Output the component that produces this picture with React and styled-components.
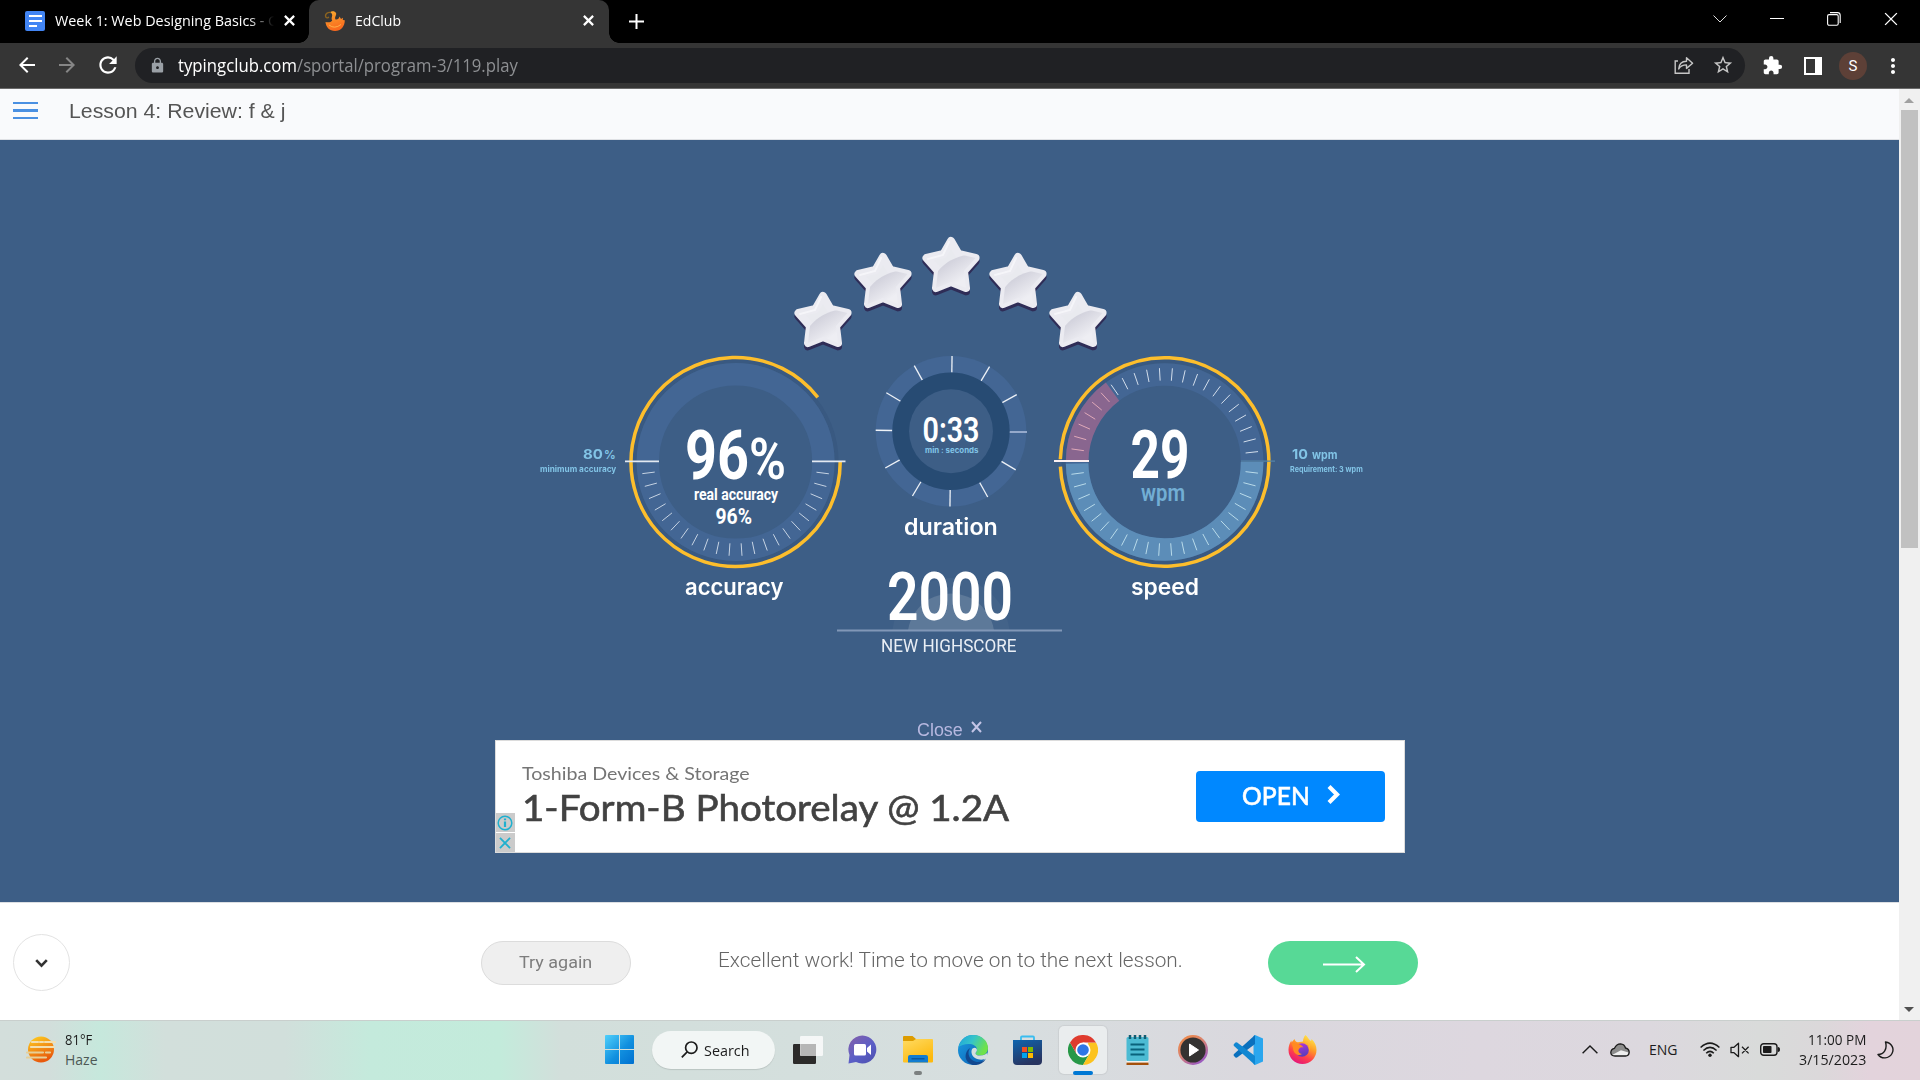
import React, { useLayoutEffect, useRef, useState } from "react";
import styled, { createGlobalStyle } from "styled-components";
import { MdArrowBack, MdArrowForward, MdRefresh, MdLock, MdExtension, MdStarBorder, MdMoreVert } from "react-icons/md";

const UI = `"Open Sans", "Noto Sans", sans-serif`;
const ARIAL = `"Liberation Sans", Arial, sans-serif`;
const NARROW = `Roboto, sans-serif`;
const ROUND = `Inter, sans-serif`;

const Global = createGlobalStyle`
  * { box-sizing: border-box; }
  body { margin: 0; background: #fff; overflow: hidden; font-family: ${UI}; }
  svg { display: block; flex: none; }
  button { border: 0; padding: 0; background: none; }
`;

/* ---------- text held to a set width ---------- */
const FitBox = styled.span`
  display: inline-block;
  flex: none;
  width: ${(p) => p.$w}px;
  white-space: pre;
  text-align: left;
`;
const FitText = styled.span`
  display: inline-block;
  transform-origin: 0 50%;
`;
function Fit({ w, children }) {
  const ref = useRef(null);
  const [scale, setScale] = useState(1);
  useLayoutEffect(() => {
    setScale(w / ref.current.offsetWidth);
  }, [w, children]);
  return (
    <FitBox $w={w}>
      <FitText ref={ref} style={{ transform: `scaleX(${scale})` }}>{children}</FitText>
    </FitBox>
  );
}

/* ---------- browser frame ---------- */
const Screen = styled.div`
  width: 1920px;
  height: 1080px;
  display: flex;
  flex-direction: column;
  overflow: hidden;
`;
const TabStrip = styled.div`
  flex: none;
  height: 43px;
  background: #000;
  display: flex;
  color: #fff;
  font-size: 15px;
`;
const Tab = styled.div`
  position: relative;
  width: ${(p) => p.$w}px;
  display: flex;
  align-items: center;
  padding: 0 ${(p) => p.$right}px 2px ${(p) => p.$left}px;
  gap: 10px;
  background: ${(p) => (p.$active ? "#353535" : "transparent")};
  border-radius: 10px 10px 0 0;
  ${(p) => p.$active && `
    &::before, &::after {
      content: ""; position: absolute; bottom: 0; width: 10px; height: 10px;
    }
    &::before { left: -10px; background: radial-gradient(circle at 0 0, transparent 9.5px, #353535 10px); }
    &::after { right: -10px; background: radial-gradient(circle at 100% 0, transparent 9.5px, #353535 10px); }
  `}
`;
const TabTitle = styled.span`
  flex: 1;
  overflow: hidden;
  white-space: nowrap;
  padding-bottom: 2px;
  ${(p) => p.$fade && `mask-image: linear-gradient(90deg, #000 88%, transparent 100%);`}
`;
const NewTab = styled.div`
  width: 54px;
  display: grid;
  place-items: center;
  padding-bottom: 1px;
`;
const WindowButtons = styled.div`
  margin-left: auto;
  display: flex;
  align-items: center;
  gap: 43px;
  padding: 0 22px 6px 0;
`;
const Toolbar = styled.div`
  flex: none;
  height: 46px;
  background: #353535;
  border-bottom: 1px solid #6a6a6a;
  display: flex;
  align-items: center;
  color: #fff;
`;
const NavButtons = styled.div`
  width: 135px;
  display: flex;
  align-items: center;
  gap: 16px;
  padding: 0 0 1px 15px;
`;
const Omnibox = styled.div`
  width: 1610px;
  height: 35px;
  border-radius: 18px;
  background: #202124;
  display: flex;
  align-items: center;
  padding: 0 11px 0 14px;
  margin-bottom: 1px;
`;
const Url = styled.span`
  display: flex;
  margin-left: 12px;
  font-size: 18px;
  line-height: 30px;
  color: #fff;
`;
const UrlPath = styled.span`color: #8d8f92;`;
const OmniActions = styled.div`
  margin-left: auto;
  display: flex;
  align-items: center;
  gap: 18px;
  color: #c6c6c6;
`;
const ToolbarActions = styled.div`
  display: flex;
  align-items: center;
  padding: 0 0 0 17px;
`;
const Avatar = styled.div`
  width: 28px;
  height: 28px;
  border-radius: 50%;
  background: #5d4037;
  display: grid;
  place-items: center;
  font: 15px/28px Roboto, sans-serif;
  margin: 0 14px 0 17px;
`;
const PanelIcon = styled.div`
  width: 18px;
  height: 18px;
  background: #353535;
  border: 2.5px solid #fff;
  border-right-width: 7px;
  margin-left: 21px;
`;

/* ---------- page ---------- */
const Viewport = styled.div`
  flex: none;
  height: 931px;
  display: flex;
`;
const Page = styled.div`
  width: 1899px;
  display: flex;
  flex-direction: column;
`;
const Header = styled.header`
  height: 51px;
  background: #f9fafc;
  border-bottom: 1px solid #dfe1e5;
  display: flex;
  align-items: center;
  padding: 0 0 7px 13px;
  gap: 31px;
  font: 20px/24px ${ARIAL};
  color: #555;
`;
const Burger = styled.div`
  width: 25px;
  height: 17px;
  border-top: 2px solid #4a90e2;
  border-bottom: 2px solid #4a90e2;
  display: flex;
  align-items: center;
  &::before { content: ""; width: 100%; height: 3px; background: #4a90e2; }
`;
const Scrollbar = styled.div`
  width: 21px;
  background: #f0f0f0;
  display: flex;
  flex-direction: column;
  align-items: center;
  padding: 9px 1px 8px 0;
`;
const Thumb = styled.div`
  width: 17px;
  height: 438px;
  background: #c1c1c1;
  margin: 7px 0 auto;
`;
const Stage = styled.main`
  height: 762px;
  background: #3d5e86;
  display: flex;
  flex-direction: column;
  align-items: center;
  color: #fff;
`;
const Stars = styled.div`
  display: flex;
  width: 316px;
  margin: 95px 0 0 3px;
  height: 116px;
`;
const StarSlot = styled.div`
  margin: ${(p) => p.$drop}px ${(p) => p.$side}px 0 ${(p) => p.$side}px;
  height: 61px;
`;
const Results = styled.div`
  display: flex;
  margin: 4px 0 0 4px;
  height: 313px;
`;
const Column = styled.div`
  width: ${(p) => p.$w}px;
  display: flex;
  flex-direction: column;
  align-items: center;
`;
const Note = styled.div`
  padding-top: 90px;
  color: #82c4e6;
  display: flex;
  flex-direction: column;
  align-items: ${(p) => p.$align};
  font-family: ${ROUND};
  font-weight: 700;
  margin: ${(p) => p.$margin};
`;
const NoteValue = styled.div`
  font-size: 13.5px;
  line-height: 18px;
  display: flex;
  align-items: baseline;
  gap: ${(p) => p.$gap}px;
  padding-left: ${(p) => p.$inset || 0}px;
`;
const NoteUnit = styled.span`font-size: 11.5px;`;
const NoteText = styled.div`font-size: 8px; line-height: 10px;`;
const DialLabel = styled.div`
  font: 600 22.5px/28px ${ROUND};
  margin-top: ${(p) => p.$top}px;
  padding-right: ${(p) => p.$shift || 0}px;
`;
const Score = styled.div`
  width: 225px;
  margin: 14px -11px 0 -13px;
  display: flex;
  flex-direction: column;
  align-items: center;
`;
const ScoreLabel = styled.div`
  font: 17.5px/22px Roboto, sans-serif;
  color: #e9eef5;
  margin-top: -4px;
  padding-right: 1px;
`;

/* ---------- advert ---------- */
const AdClose = styled.div`
  margin-top: 52px;
  height: 20px;
  display: flex;
  align-items: center;
  gap: 8px;
  padding-right: 1px;
  font: 17.5px/20px ${ARIAL};
  color: #b7b8e0;
`;
const CloseMark = styled.div`
  padding-bottom: 7px;
`;
const Ad = styled.div`
  width: 910px;
  height: 113px;
  background: #fff;
  border: 1px solid #dcdcdc;
  display: flex;
  align-items: stretch;
`;
const AdBadges = styled.div`
  width: 19px;
  display: flex;
  flex-direction: column;
  justify-content: flex-end;
  gap: 1px;
`;
const AdBadge = styled.div`
  height: 19px;
  background: #cbcbcb;
  display: grid;
  place-items: center;
`;
const AdCopy = styled.div`
  padding: 20px 0 0 7px;
  flex: 1;
`;
const Advertiser = styled.div`
  font: 18px/24px Lato, sans-serif;
  color: #757575;
`;
const Headline = styled.div`
  font: 36px/44px Lato, sans-serif;
  color: #424242;
  -webkit-text-stroke: 0.6px #424242;
`;
const AdButton = styled.button`
  width: 189px;
  height: 51px;
  margin: 30px 19px 0 0;
  border-radius: 4px;
  background: #08f;
  color: #fff;
  display: flex;
  align-items: center;
  justify-content: center;
  gap: 17px;
  font: 500 25px/30px Lato, sans-serif;
  -webkit-text-stroke: 0.5px #fff;
  padding: 0 0 4px 1px;
`;

/* ---------- footer ---------- */
const Footer = styled.footer`
  height: 118px;
  background: #fff;
  border-top: 1px solid #dcdfe3;
  display: flex;
  align-items: center;
  padding: 2px 0 0 13px;
  font-family: Roboto, sans-serif;
`;
const CollapseButton = styled.button`
  width: 57px;
  height: 57px;
  border: 1px solid #e3e3e3;
  border-radius: 50%;
  display: grid;
  place-items: center;
  padding-top: 1px;
`;
const TryAgain = styled.button`
  width: 150px;
  height: 44px;
  margin-left: 411px;
  border: 1px solid #dcdcdc;
  border-radius: 22px;
  background: #efefef;
  font: 17px/24px Roboto, sans-serif;
  color: #7d7d7d;
  padding: 0 1px 1px 0;
`;
const Message = styled.div`
  margin: -6px 85px 0 87px;
  font: 300 20px/24px Roboto, sans-serif;
  color: #666;
`;
const NextButton = styled.button`
  width: 150px;
  height: 44px;
  border-radius: 22px;
  background: #57d996;
  display: grid;
  place-items: center;
  padding: 4px 0 0 2px;
`;

/* ---------- taskbar ---------- */
const Taskbar = styled.div`
  flex: none;
  height: 60px;
  border-top: 1px solid #c9cfcd;
  background: linear-gradient(90deg, #d3dedb 0, #d2dedb 50px, #c6e8dc 100px, #d2dfdb 165px, #d1dfdb 285px, #c4eadc 370px, #c3ebdb 500px, #d2dfdb 560px, #d4dfdd 800px, #d7dedf 1000px, #dad8de 1250px, #ddd7df 1480px, #dcd8de 1650px, #d9dbda 1760px, #dbd8da 1820px, #e3d3dc 1870px, #e3d3db 1920px);
  display: flex;
  align-items: center;
  padding-bottom: 2px;
  color: #1c1c1c;
  font-size: 14px;
`;
const Weather = styled.div`
  width: 592px;
  display: flex;
  gap: 9px;
  padding-left: 26px;
  align-items: center;
`;
const TwoLines = styled.div`
  display: flex;
  flex-direction: column;
  align-items: ${(p) => p.$align};
  line-height: 20px;
  padding-top: ${(p) => p.$nudge || 0}px;
`;
const Dim = styled.span`color: #4d5955;`;
const AppSlot = styled.div`
  position: relative;
  width: 55px;
  height: 58px;
  display: grid;
  place-items: center;
`;
const ActiveSlot = styled.div`
  width: 48px;
  height: 48px;
  border-radius: 5px;
  background: #eaedee;
  box-shadow: 0 0 1px 1px rgba(0, 0, 0, 0.06);
  display: grid;
  place-items: center;
`;
const Running = styled.div`
  position: absolute;
  bottom: 4px;
  left: calc(50% - ${(p) => p.$w / 2}px);
  width: ${(p) => p.$w}px;
  height: 4px;
  border-radius: 2px;
  background: ${(p) => (p.$active ? "#0078d4" : "#7b8080")};
`;
const SearchPill = styled.div`
  width: 123px;
  height: 38px;
  margin: 0 5px;
  border-radius: 19px;
  background: #f2f6f5;
  box-shadow: 0 1px 1px rgba(0, 0, 0, 0.12);
  display: flex;
  align-items: center;
  gap: 6px;
  padding: 0 0 0 29px;
  font-size: 15px;
`;
const Tray = styled.div`
  margin-left: auto;
  display: flex;
  align-items: center;
  padding-right: 26px;
`;
const TrayItem = styled.div`margin-right: ${(p) => p.$gap}px;`;

/* ---------- dial drawing helpers ---------- */
const polar = (cx, cy, r, deg) => {
  const a = (deg * Math.PI) / 180;
  return [cx + r * Math.cos(a), cy + r * Math.sin(a)];
};
const arc = (cx, cy, r, from, to) => {
  const [x1, y1] = polar(cx, cy, r, from);
  const [x2, y2] = polar(cx, cy, r, to);
  return `M${x1} ${y1}A${r} ${r} 0 ${to - from > 180 ? 1 : 0} 1 ${x2} ${y2}`;
};
const Ticks = ({ cx, cy, r1, r2, start, step, count, color, width }) => (
  <g stroke={color} strokeWidth={width}>
    {Array.from({ length: count }, (_, i) => {
      const [x1, y1] = polar(cx, cy, r1, start + i * step);
      const [x2, y2] = polar(cx, cy, r2, start + i * step);
      return <line key={i} x1={x1} y1={y1} x2={x2} y2={y2} />;
    })}
  </g>
);
const DialText = ({ x, y, w, size, weight = 700, fill = "#fff", font = NARROW, children }) => (
  <text x={x} y={y} textLength={w} lengthAdjust="spacingAndGlyphs" fontSize={size} fontWeight={weight} fill={fill} fontFamily={font}>
    {children}
  </text>
);

const AccuracyDial = () => (
  <svg width="228" height="214">
    <circle cx="113.6" cy="107" r="101" fill="none" stroke="#395981" strokeWidth="4" />
    <circle cx="113.6" cy="107" r="87.8" fill="none" stroke="#436694" strokeWidth="22.4" />
    <Ticks cx={113.6} cy={107} r1={81.5} r2={94} start={7.2} step={7.89} count={22} color="#c6d3e3" width={1} />
    <path d={arc(113.6, 107, 104.6, 0, 321.8)} fill="none" stroke="#fdbe2c" strokeWidth="3.5" />
    <path d="M3 106.3H37M190 106.3H223.5" stroke="#e3e9f1" strokeWidth="1.8" />
    <DialText x={63} y={124} w={64} size={68}>96</DialText>
    <DialText x={127} y={124} w={37} size={57} weight={600}>%</DialText>
    <DialText x={72} y={145} w={84} size={16.5}>real accuracy</DialText>
    <DialText x={93.5} y={168.5} w={36.5} size={22.5}>96%</DialText>
  </svg>
);

const DurationDial = () => (
  <svg width="152" height="152">
    <circle cx="76" cy="76.3" r="75.3" fill="#436694" />
    <Ticks cx={76} cy={76.3} r1={58.7} r2={75.3} start={30.8} step={30} count={11} color="#eef2f7" width={1.3} />
    <path d="M134 77H152" stroke="#9fb1d2" strokeWidth="1.8" />
    <circle cx="76" cy="76.3" r="58.7" fill="#274b73" />
    <circle cx="76" cy="76.3" r="42" fill="#3d5e86" />
    <DialText x={47.5} y={86.5} w={57} size={35.5} weight={600}>0:33</DialText>
    <DialText x={50} y={98} w={53.5} size={8} weight={700} fill="#82c4e6" font={ROUND}>min : seconds</DialText>
  </svg>
);

const SpeedDial = () => (
  <svg width="228" height="214">
    <circle cx="113.6" cy="107" r="101" fill="none" stroke="#395981" strokeWidth="4" />
    <circle cx="113.6" cy="107" r="87.5" fill="none" stroke="#436694" strokeWidth="22.6" />
    <path d={arc(113.6, 107, 87.5, 0, 179)} fill="none" stroke="#5c8db8" strokeWidth="22.6" />
    <path d={arc(113.6, 107, 87.5, 180, 233.5)} fill="none" stroke="#89668f" strokeWidth="22.6" />
    <Ticks cx={113.6} cy={107} r1={81.5} r2={94} start={6.8} step={7.89} count={22} color="#b9dbea" width={1} />
    <Ticks cx={113.6} cy={107} r1={81.5} r2={94} start={188} step={7.89} count={6} color="#e0a9b9" width={1} />
    <Ticks cx={113.6} cy={107} r1={81.5} r2={94} start={235.3} step={7.89} count={16} color="#d3deec" width={1} />
    <path d={arc(113.6, 107, 104.3, -178.5, 177.5)} fill="none" stroke="#fdbe2c" strokeWidth="3.5" />
    <path d="M3 106H38" stroke="#fbf0f2" strokeWidth="2" />
    <path d="M190 106.2H224" stroke="#5583a6" strokeWidth="1.2" />
    <DialText x={79.5} y={123} w={59} size={67}>29</DialText>
    <DialText x={90} y={146} w={44} size={24} weight={600} fill="#72aed4">wpm</DialText>
  </svg>
);

const ScoreArt = () => (
  <svg width="225" height="84">
    <clipPath id="horizon"><rect width="225" height="75" /></clipPath>
    <g clipPath="url(#horizon)" fill="#fff">
      <circle cx="114" cy="82" r="59" fillOpacity=".03" />
      <circle cx="114" cy="82" r="43.5" fillOpacity=".14" />
    </g>
    <path d="M0 75.5H225" stroke="#8197b7" strokeWidth="2" />
    <DialText x={50} y={65} w={126} size={67} weight={600}>2000</DialText>
  </svg>
);

const STAR = "30,5 37.5,18 54.5,22 43,35 45,52 30,46 15,52 17,35 5.5,22 22.5,18";
const Star = ({ id }) => (
  <svg width="60" height="61">
    <defs>
      <clipPath id={`c${id}`}><polygon points={STAR} /></clipPath>
      <linearGradient id={`g${id}`} x1="0" y1="0" x2=".7" y2="1">
        <stop offset=".2" stopColor="#cbcbd7" />
        <stop offset=".75" stopColor="#eeeef3" />
      </linearGradient>
    </defs>
    <polygon points={STAR} transform="translate(0 3.4)" fill="#2f2d57" stroke="#2f2d57" strokeWidth="8" strokeLinejoin="round" />
    <polygon points={STAR} fill="#e9eaef" stroke="#ebebf1" strokeWidth="8" strokeLinejoin="round" />
    <path d="M12 44C18 30 30 20 56 17V58H12Z" fill={`url(#g${id})`} clipPath={`url(#c${id})`} />
    <path d="M28 6L22 19L7 23" fill="none" stroke="#f9f9fc" strokeWidth="2" strokeLinecap="round" opacity=".7" />
  </svg>
);

/* ---------- browser icons ---------- */
const Cross = ({ size = 10, width = 2, color = "#fff" }) => (
  <svg width={size} height={size} viewBox="0 0 10 10">
    <path d="M.8.8L9.2 9.2M9.2.8L.8 9.2" stroke={color} strokeWidth={width} />
  </svg>
);
const DocsIcon = () => (
  <svg width="20" height="20">
    <rect width="20" height="20" rx="2" fill="#4285f4" />
    <path d="M4 5H17M4 10H17M4 15H12" stroke="#fff" strokeWidth="2.2" />
  </svg>
);
const PhoenixIcon = () => (
  <svg width="21" height="22" viewBox="0 0 21 22">
    <defs><linearGradient id="phx" x2=".3" y2="1"><stop stopColor="#f9ab2e" /><stop offset="1" stopColor="#f9691e" /></linearGradient></defs>
    <path d="M11.5 9.5C14 9.8 15 8.5 15.5 6.5L17 9L19 7.8L18.8 10L20.8 10.3C20.8 16.5 17 21 11 21C5.5 21 1.8 17 1.5 12C4.5 12.8 7 12.3 8.2 10.5C7 8.8 8 7 8.2 5.5C8.3 4 7.5 3 6.2 2.8C7.2.8 10.8.8 12 3C13 5 10.2 6.5 11.5 9.5Z" fill="url(#phx)" />
    <path d="M6.8 2.5C4 1.8 1.4 3.5 1.5 6C1.7 8.2 4.2 8.4 4.7 6.8" fill="none" stroke="#8c6420" strokeWidth="1.4" />
    <path d="M5 15Q10.5 19.5 17 14.5" fill="none" stroke="#ffb54d" strokeWidth=".9" />
  </svg>
);
const ShareIcon = () => (
  <svg width="20" height="20" viewBox="0 0 20 20" fill="none" stroke="#c6c6c6" strokeWidth="1.4">
    <path d="M4 6H1.2V18.3H15V14" />
    <path d="M4.7 14C5 9 8 6.3 12.5 6.2V2.7L18.6 8.2L12.5 13.4V9.9C9 9.9 6.5 11 4.7 14Z" strokeLinejoin="round" />
  </svg>
);

/* ---------- taskbar icons ---------- */
const WeatherIcon = () => (
  <svg width="30" height="28" viewBox="0 0 30 28">
    <defs><linearGradient id="sun" x2=".4" y2="1"><stop stopColor="#ffd321" /><stop offset="1" stopColor="#e8590c" /></linearGradient></defs>
    <circle cx="15" cy="13.5" r="13" fill="url(#sun)" />
    <path d="M6 6H12M14 6H17M19 6H29M5 11H28" stroke="#f3dfae" strokeWidth="2.2" strokeLinecap="round" />
    <path d="M1 16.5H17M20 16.5H24M1 21.5H20" stroke="#e6cf98" strokeWidth="2.2" strokeLinecap="round" />
  </svg>
);
const StartIcon = () => (
  <svg width="29" height="29">
    <defs><linearGradient id="win" x2="1" y2="1"><stop stopColor="#4fd0fb" /><stop offset=".55" stopColor="#1190df" /><stop offset="1" stopColor="#0070d0" /></linearGradient></defs>
    <path d="M1 0H14V14H0V1Q0 0 1 0ZM15 0H28Q29 0 29 1V14H15ZM0 15H14V29H1Q0 29 0 28ZM15 15H29V28Q29 29 28 29H15Z" fill="url(#win)" />
  </svg>
);
const SearchIcon = () => (
  <svg width="17" height="17" fill="none" stroke="#1b1b1b" strokeWidth="1.7">
    <circle cx="10.3" cy="6.7" r="5.7" /><path d="M6.2 10.8L.8 16.3" />
  </svg>
);
const TaskViewIcon = () => (
  <svg width="30" height="28">
    <rect y="8" width="23" height="20" rx="1.2" fill="#2c2b2a" />
    <rect x="7" width="23" height="20" rx="1.2" fill="#fdfdfd" fillOpacity=".82" />
    <rect x="7.5" y="8" width="15.5" height="12" fill="#b6b6b6" />
  </svg>
);
const ChatIcon = () => (
  <svg width="29" height="29" viewBox="0 0 29 29">
    <defs><linearGradient id="chat" x1="0" x2=".8" y2="1"><stop stopColor="#8660a9" /><stop offset=".6" stopColor="#5b5fc7" /><stop offset="1" stopColor="#4f52b2" /></linearGradient></defs>
    <path d="M14.5.5A14 14 0 1 1 8 27L.5 28.5L1.5 20A14 14 0 0 1 14.5.5Z" fill="url(#chat)" />
    <rect x="6" y="9" width="12" height="11.5" rx="1.5" fill="#fff" />
    <path d="M19 13L23 9.5V20L19 16.5Z" fill="#fff" />
  </svg>
);
const FolderIcon = () => (
  <svg width="30" height="27" viewBox="0 0 30 27">
    <defs><linearGradient id="fold" x2=".6" y2="1"><stop stopColor="#ffdb63" /><stop offset="1" stopColor="#fdb90d" /></linearGradient></defs>
    <path d="M0 1Q0 0 1 0H9.5L13 3H29V10H0Z" fill="#dd9c00" />
    <path d="M0 5H10L13 3H29Q30 3 30 4V25.5Q30 26.5 29 26.5H1Q0 26.5 0 25.5Z" fill="url(#fold)" />
    <path d="M5 26.5V21Q5 19 7 19H23Q25 19 25 21V26.5Z" fill="#127cd0" />
    <path d="M8.5 22.8H21.5" stroke="#0a4f93" strokeWidth="1.2" />
  </svg>
);
const EdgeIcon = () => (
  <svg width="30" height="30" viewBox="0 0 30 30">
    <defs>
      <linearGradient id="e1" x2="1" y2=".4"><stop stopColor="#1da3dc" /><stop offset=".5" stopColor="#35c4c9" /><stop offset="1" stopColor="#6fe24a" /></linearGradient>
      <linearGradient id="e2" y2="1"><stop stopColor="#1b9de2" /><stop offset="1" stopColor="#0b5cb0" /></linearGradient>
    </defs>
    <circle cx="15" cy="15" r="15" fill="url(#e2)" />
    <path d="M.5 12C3 4 8 0 15 0C24 0 30 6 30 13C30 18 26.5 20.5 22.5 20.5C19 20.5 17.5 19.5 17.5 18.5C17.5 17.5 19 17 19 14.8C19 11 15 9 10.5 9C6 9 2.5 10.5.5 12Z" fill="url(#e1)" />
    <path d="M12.5 13C9 16.5 10 24 17 26.5C21 28 25 26.5 28 24C25 28.5 20 30.5 15 30C9 28 6.5 23.5 8 18.5C8.8 15.5 10.5 13.7 12.5 13Z" fill="#11488f" />
    <path d="M17.5 18.5C18 20.3 20 20.8 22.5 20.5C26 20.3 28.5 19 29.5 17.5V22.5L28.6 23.3C26 25 21 25.5 17 23C13.5 20.7 12.5 16 14.5 13.5Q18 11.5 19 14.8C19 17 17.3 17.3 17.5 18.5Z" fill="#d5dfde" />
  </svg>
);
const StoreIcon = () => (
  <svg width="29" height="30" viewBox="0 0 29 30">
    <defs><linearGradient id="bag" x2=".4" y2="1"><stop stopColor="#0f65af" /><stop offset="1" stopColor="#273460" /></linearGradient></defs>
    <path d="M8 7V2.5Q8 1.5 9 1.5H20Q21 1.5 21 2.5V7" fill="none" stroke="#39bdf0" strokeWidth="1.8" />
    <path d="M0 5H29V26Q29 30 25 30H4Q0 30 0 26Z" fill="url(#bag)" />
    <path d="M9 12H14V17H9Z" fill="#f25022" /><path d="M15 12H20V17H15Z" fill="#7fba00" />
    <path d="M9 18H14V23H9Z" fill="#00a4ef" /><path d="M15 18H20V23H15Z" fill="#ffb900" />
  </svg>
);
const ChromeIcon = () => (
  <svg width="30" height="30" viewBox="0 0 30 30">
    <path d="M2 7.5A15 15 0 0 0 15 30L21.5 18.8L15 15L8.5 18.8Z" fill="#279847" />
    <path d="M28 7.5A15 15 0 0 1 15 30L21.5 18.8L20 7.5Z" fill="#fcc31e" />
    <path d="M15 7.5H28A15 15 0 0 0 2 7.5L8.5 18.8Z" fill="#df3b2e" />
    <circle cx="15" cy="15" r="7.5" fill="#fff" /><circle cx="15" cy="15" r="5.8" fill="#2f76e6" />
  </svg>
);
const NotepadIcon = () => (
  <svg width="23" height="30" viewBox="0 0 23 30">
    <path d="M.5 24H22.5V29H.5Z" fill="#f4f2ef" /><path d="M.5 28.8H22.5" stroke="#a4500b" strokeWidth="2.4" />
    <rect x=".5" y="2" width="22" height="24" rx="1.5" fill="#4cbbd3" />
    <path d="M4.5 9.5H18.5M4.5 14.5H18.5M4.5 19.5H18.5" stroke="#09627c" strokeWidth="1.8" />
    <path d="M4 0V4M9 0V4M14 0V4M19 0V4" stroke="#115c72" strokeWidth="2.5" />
  </svg>
);
const MediaIcon = () => (
  <svg width="30" height="30" viewBox="0 0 30 30">
    <defs><linearGradient id="med" x2=".7" y2="1"><stop stopColor="#f48a3d" /><stop offset=".5" stopColor="#d9836f" /><stop offset="1" stopColor="#9757c6" /></linearGradient></defs>
    <circle cx="15" cy="15" r="15" fill="url(#med)" /><circle cx="15" cy="15" r="12.6" fill="#343231" />
    <path d="M11.5 9L20.5 15L11.5 21Z" fill="#fff" stroke="#fff" strokeLinejoin="round" />
  </svg>
);
const CodeIcon = () => (
  <svg width="30" height="30" viewBox="0 0 30 30">
    <path d="M22 0L30 3.5V26.5L22 30L20.5 29V1Z" fill="#2aa6ee" />
    <path d="M22 0L1 19Q0 20 1 21L2.5 22.5Q3.5 23 4.5 22.3L22 9Z" fill="#0a70bd" />
    <path d="M22 30L1 11Q0 10 1 9L2.5 7.5Q3.5 7 4.5 7.7L22 21Z" fill="#1187d2" />
  </svg>
);
const FirefoxIcon = () => (
  <svg width="29" height="29" viewBox="0 0 29 29">
    <defs>
      <linearGradient id="ff" x1=".8" x2=".3" y2="1"><stop stopColor="#fff14f" /><stop offset=".4" stopColor="#ff9a26" /><stop offset=".7" stopColor="#ff3f4b" /><stop offset="1" stopColor="#e2147d" /></linearGradient>
      <linearGradient id="fp" x2=".3" y2="1"><stop stopColor="#b833e1" /><stop offset="1" stopColor="#5b3dbd" /></linearGradient>
    </defs>
    <path d="M17.5 0C20 2 20.5 4.5 23 6C23.5 5 23.5 4 23.5 4C27 7 28.5 11 28.5 15A14 14 0 0 1 .5 15C.5 11 1.5 8 3.5 5.5V7.5L6.5 4C7 6 8 7 10 7.3L15 6.5C15 4 16 1.5 17.5 0Z" fill="url(#ff)" />
    <circle cx="14" cy="15" r="6.8" fill="url(#fp)" />
    <path d="M3.5 8C8 8 13 9 15.5 12.5C13 12 12 12.5 11 14C9.5 16 11 18.5 14 19C10 22 5 18 5 13Z" fill="#ff8a22" />
    <path d="M17 6C21 8 22.5 13 21 17C23 14 22.5 9 19 6Z" fill="#ffbd36" />
  </svg>
);
const CloudIcon = () => (
  <svg width="20" height="14" viewBox="0 0 20 14">
    <path d="M5 13Q.8 13 .8 9.5Q1 6 4.5 5.3Q6.5.8 10.5.8Q14.5 1 15.5 5Q19.2 6 19.2 9.3Q19 13 15.5 13Z" fill="#8d8d8d" />
    <path d="M2 12L11 7.3L18.5 9.5Q18.5 13 15 13H5Z" fill="#efefef" />
    <path d="M5 13Q.8 13 .8 9.5Q1 6 4.5 5.3Q6.5.8 10.5.8Q14.5 1 15.5 5Q19.2 6 19.2 9.3Q19 13 15.5 13Z" fill="none" stroke="#1b1b1b" strokeWidth="1.3" />
  </svg>
);
const WifiIcon = () => (
  <svg width="20" height="16" viewBox="0 0 20 16" fill="none" stroke="#1b1b1b" strokeWidth="1.5">
    <path d="M.6 5.5Q10-3.2 19.4 5.5M3.4 8.5Q10 2.2 16.6 8.5M6.2 11.3Q10 7.5 13.8 11.3" />
    <circle cx="10" cy="13.3" r="1.7" fill="#1b1b1b" stroke="none" />
  </svg>
);
const MuteIcon = () => (
  <svg width="20" height="16" viewBox="0 0 20 16" fill="none" stroke="#1b1b1b" strokeWidth="1.3">
    <path d="M1 5.3H4L8.5 1.3V14.7L4 10.7H1ZM12 4.8L18.6 11.4M18.6 4.8L12 11.4" strokeLinejoin="round" />
  </svg>
);
const BatteryIcon = () => (
  <svg width="20" height="13" viewBox="0 0 20 13">
    <rect x=".7" y=".7" width="16.3" height="11.6" rx="3" fill="none" stroke="#1b1b1b" strokeWidth="1.4" />
    <rect x="3" y="3" width="8.5" height="7" rx=".8" fill="#1b1b1b" /><path d="M18 4.5H19Q20 5 20 6.5Q20 8 19 8.5H18Z" fill="#1b1b1b" stroke="#1b1b1b" strokeWidth=".6" />
  </svg>
);
const MoonIcon = () => (
  <svg width="17" height="18" viewBox="0 0 17 18" fill="none" stroke="#1b1b1b" strokeWidth="1.4">
    <path d="M8.5 1C15 2 17.5 8 15 12.5C12 17.8 4.5 18.5 1 13.5C7 13.5 10.5 8 8.5 1Z" strokeLinejoin="round" />
  </svg>
);

const STARS = [[56, 0], [17, 0], [1, 7.5], [17, 0], [56, 0]];
const APPS = [
  { name: "taskview", Icon: TaskViewIcon },
  { name: "chat", Icon: ChatIcon },
  { name: "folder", Icon: FolderIcon, running: 8 },
  { name: "edge", Icon: EdgeIcon },
  { name: "store", Icon: StoreIcon },
  { name: "chrome", Icon: ChromeIcon, running: 20, active: true },
  { name: "notepad", Icon: NotepadIcon },
  { name: "media", Icon: MediaIcon },
  { name: "code", Icon: CodeIcon },
  { name: "firefox", Icon: FirefoxIcon },
];

function BrowserFrame() {
  return (
    <>
      <TabStrip>
        <Tab $w={309} $left={25} $right={14}>
          <DocsIcon />
          <TabTitle $fade><Fit w={201}>Week 1: Web Designing Basics</Fit><Fit w={23}> - G</Fit></TabTitle>
          <Cross size={11} />
        </Tab>
        <Tab $w={300} $left={15} $right={15} $active>
          <PhoenixIcon />
          <TabTitle><Fit w={46}>EdClub</Fit></TabTitle>
          <Cross size={11} />
        </Tab>
        <NewTab>
          <svg width="15" height="15"><path d="M7.5 0V15M0 7.5H15" stroke="#fff" strokeWidth="2" /></svg>
        </NewTab>
        <WindowButtons>
          <svg width="14" height="8" fill="none" stroke="#ddd"><path d="M.5.5L7 7L13.5.5" /></svg>
          <svg width="14" height="3"><path d="M0 1.5H14" stroke="#fff" /></svg>
          <svg width="14" height="14" fill="none" stroke="#fff" strokeWidth="1.1"><rect x=".6" y="2.6" width="10.6" height="10.6" rx="1.5" /><path d="M3 .6H10.5Q13.2.6 13.2 3.5V11" /></svg>
          <Cross size={14} width={1} />
        </WindowButtons>
      </TabStrip>
      <Toolbar>
        <NavButtons>
          <MdArrowBack size={24} />
          <MdArrowForward size={24} color="#868686" />
          <MdRefresh size={26} />
        </NavButtons>
        <Omnibox>
          <MdLock size={17} color="#9aa0a6" />
          <Url><Fit w={119}>typingclub.com</Fit><UrlPath><Fit w={221}>/sportal/program-3/119.play</Fit></UrlPath></Url>
          <OmniActions><ShareIcon /><MdStarBorder size={22} /></OmniActions>
        </Omnibox>
        <ToolbarActions>
          <MdExtension size={21} />
          <PanelIcon />
          <Avatar>S</Avatar>
          <MdMoreVert size={24} />
        </ToolbarActions>
      </Toolbar>
    </>
  );
}

function ResultsPanel() {
  return (
    <>
      <Stars>
        {STARS.map(([drop, side], i) => (
          <StarSlot key={i} $drop={drop} $side={side}><Star id={i} /></StarSlot>
        ))}
      </Stars>
      <Results>
        <Note $align="flex-end" $margin="0 6px 0 0">
          <NoteValue $gap={1}><Fit w={20}>80</Fit><NoteUnit><Fit w={12}>%</Fit></NoteUnit></NoteValue>
          <NoteText><Fit w={76}>minimum accuracy</Fit></NoteText>
        </Note>
        <Column $w={228}>
          <AccuracyDial />
          <DialLabel $top={4} $shift={4}><Fit w={98}>accuracy</Fit></DialLabel>
        </Column>
        <Column $w={201}>
          <DurationDial />
          <DialLabel $top={6}><Fit w={94}>duration</Fit></DialLabel>
          <Score>
            <ScoreArt />
            <ScoreLabel><Fit w={136}>NEW HIGHSCORE</Fit></ScoreLabel>
          </Score>
        </Column>
        <Column $w={228}>
          <SpeedDial />
          <DialLabel $top={4}><Fit w={68}>speed</Fit></DialLabel>
        </Column>
        <Note $align="flex-start" $margin="0 0 0 11px">
          <NoteValue $gap={4} $inset={2}><Fit w={16}>10</Fit><NoteUnit><Fit w={26}>wpm</Fit></NoteUnit></NoteValue>
          <NoteText><Fit w={73}>Requirement: 3 wpm</Fit></NoteText>
        </Note>
      </Results>
    </>
  );
}

function Advert() {
  return (
    <>
      <AdClose>
        <Fit w={46}>Close</Fit>
        <CloseMark><svg width="11" height="12"><path d="M1 1L10 11M10 1L1 11" stroke="#c3c4e6" strokeWidth="2" /></svg></CloseMark>
      </AdClose>
      <Ad>
        <AdBadges>
          <AdBadge>
            <svg width="16" height="16" fill="none" stroke="#1fb0cf"><circle cx="8" cy="8" r="6.8" strokeWidth="1.5" /><path d="M8 3.5V5.2M8 6.5V12" strokeWidth="2.2" /></svg>
          </AdBadge>
          <AdBadge><Cross size={12} width={1.5} color="#1fb0cf" /></AdBadge>
        </AdBadges>
        <AdCopy>
          <Advertiser><Fit w={228}>Toshiba Devices &amp; Storage</Fit></Advertiser>
          <Headline><Fit w={487}>1-Form-B Photorelay @ 1.2A</Fit></Headline>
        </AdCopy>
        <AdButton>
          <Fit w={68}>OPEN</Fit>
          <svg width="13" height="19"><path d="M2 1.5L10 9.5L2 17.5" fill="none" stroke="#fff" strokeWidth="4.2" /></svg>
        </AdButton>
      </Ad>
    </>
  );
}

export default function App() {
  return (
    <Screen>
      <Global />
      <BrowserFrame />
      <Viewport>
        <Page>
          <Header><Burger /><Fit w={216}>Lesson 4: Review: f &amp; j</Fit></Header>
          <Stage>
            <ResultsPanel />
            <Advert />
          </Stage>
          <Footer>
            <CollapseButton>
              <svg width="13" height="9"><path d="M1.2 1.2L6.5 6.7L11.8 1.2" fill="none" stroke="#333" strokeWidth="2.6" /></svg>
            </CollapseButton>
            <TryAgain><Fit w={73}>Try again</Fit></TryAgain>
            <Message><Fit w={465}>Excellent work! Time to move on to the next lesson.</Fit></Message>
            <NextButton>
              <svg width="43" height="17"><path d="M0 8.5H41M33 1L41 8.5L33 16" fill="none" stroke="#fff" strokeWidth="2" /></svg>
            </NextButton>
          </Footer>
        </Page>
        <Scrollbar>
          <svg width="10" height="5"><path d="M0 5L5 0L10 5Z" fill="#a0a0a0" /></svg>
          <Thumb />
          <svg width="10" height="5"><path d="M0 0L5 5L10 0Z" fill="#505050" /></svg>
        </Scrollbar>
      </Viewport>
      <Taskbar>
        <Weather>
          <WeatherIcon />
          <TwoLines $align="flex-start" $nudge={1}><Fit w={27}>81°F</Fit><Dim><Fit w={33}>Haze</Fit></Dim></TwoLines>
        </Weather>
        <AppSlot><StartIcon /></AppSlot>
        <SearchPill><SearchIcon /><Fit w={46}>Search</Fit></SearchPill>
        {APPS.map(({ name, Icon, running, active }) => (
          <AppSlot key={name}>
            {active ? <ActiveSlot><Icon /></ActiveSlot> : <Icon />}
            {running && <Running $w={running} $active={active} />}
          </AppSlot>
        ))}
        <Tray>
          <TrayItem $gap={12}><svg width="16" height="9" fill="none" stroke="#1b1b1b" strokeWidth="1.4"><path d="M.6 8.3L8 1L15.4 8.3" /></svg></TrayItem>
          <TrayItem $gap={19}><CloudIcon /></TrayItem>
          <TrayItem $gap={22}><Fit w={29}>ENG</Fit></TrayItem>
          <TrayItem $gap={10}><WifiIcon /></TrayItem>
          <TrayItem $gap={10}><MuteIcon /></TrayItem>
          <TrayItem $gap={19}><BatteryIcon /></TrayItem>
          <TrayItem $gap={11}><TwoLines $align="flex-end"><Fit w={58}>11:00 PM</Fit><Fit w={67}>3/15/2023</Fit></TwoLines></TrayItem>
          <MoonIcon />
        </Tray>
      </Taskbar>
    </Screen>
  );
}
